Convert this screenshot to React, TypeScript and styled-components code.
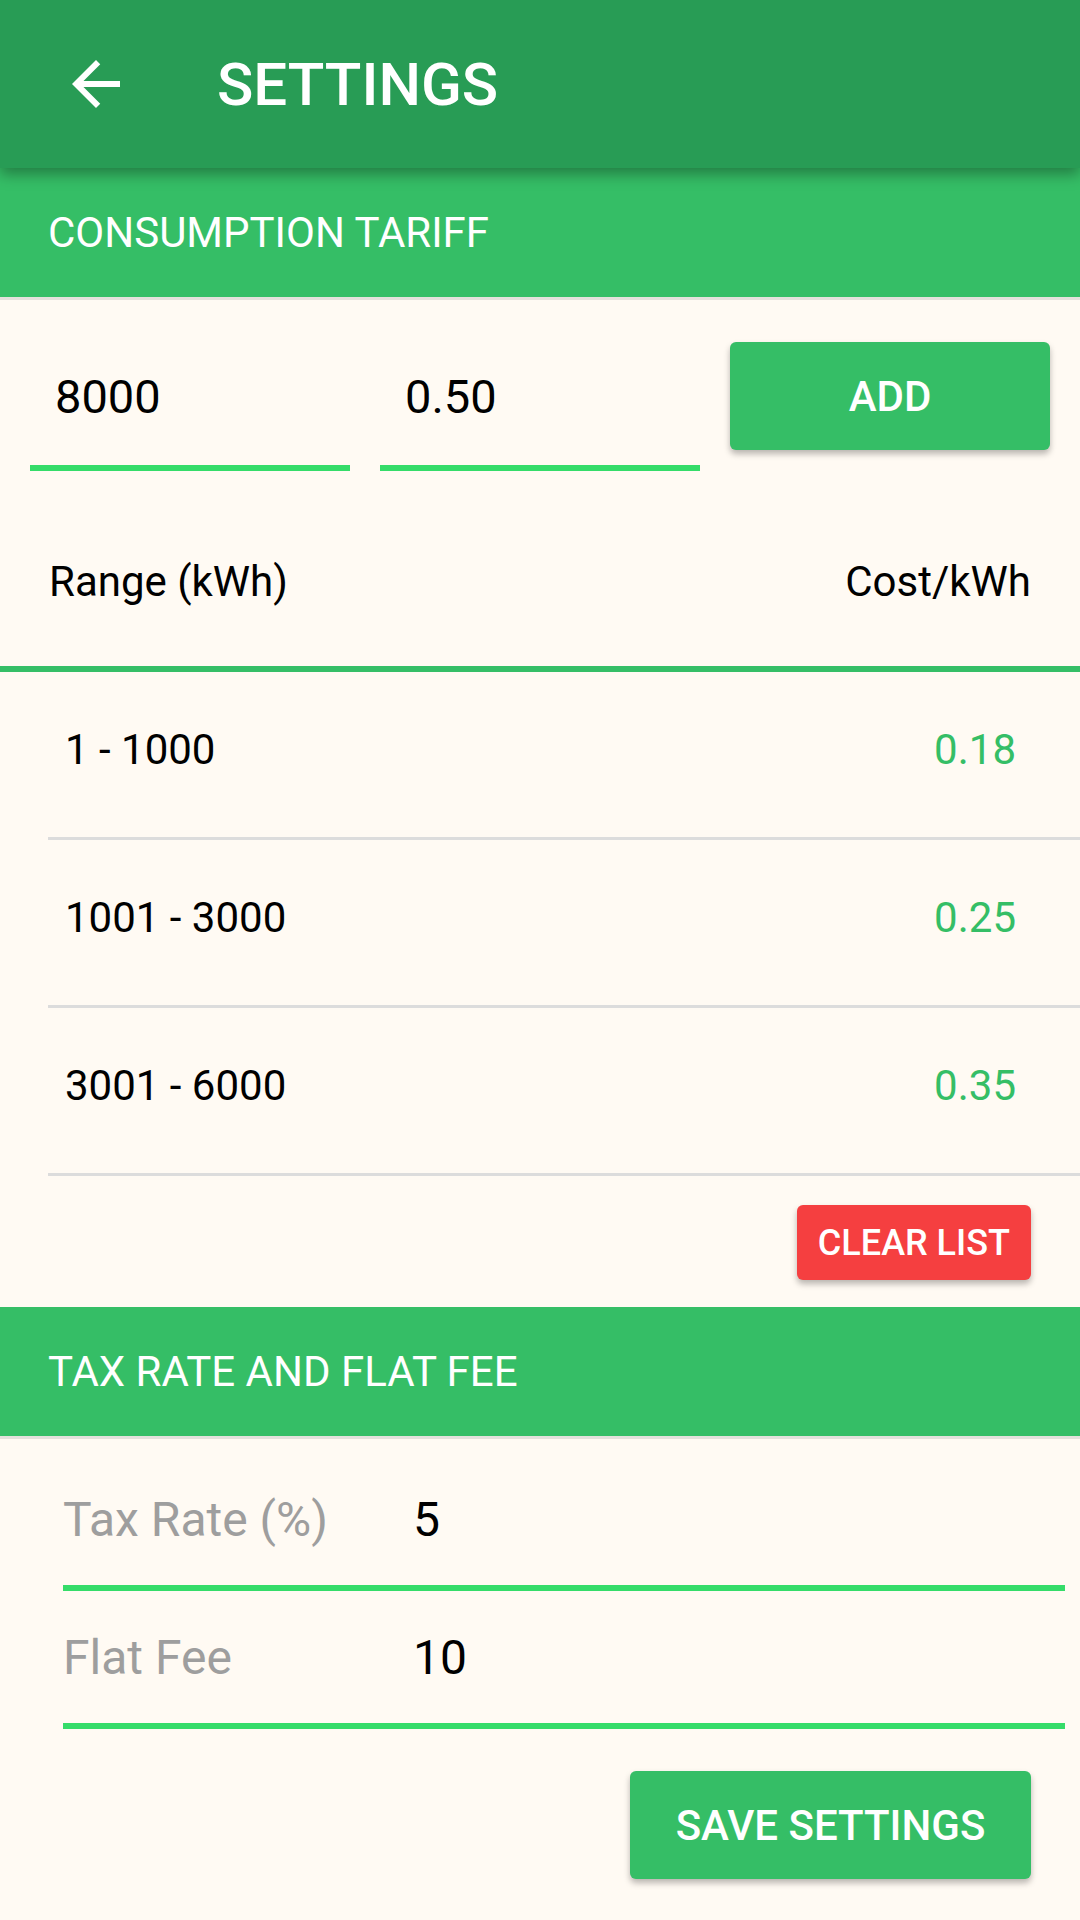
import React from 'react';
import styled, { createGlobalStyle } from 'styled-components';

const GlobalStyle = createGlobalStyle`
  html, body {
    margin: 0;
    padding: 0;
    background: #fffaf3;
  }
  body {
    font-family: Roboto, 'Noto Sans', sans-serif;
    color: #000;
  }
`;

interface Tier {
  range: string;
  cost: string;
}

const tiers: Tier[] = [
  { range: '1 - 1000', cost: '0.18' },
  { range: '1001 - 3000', cost: '0.25' },
  { range: '3001 - 6000', cost: '0.35' },
];

const BackIcon: React.FC = () => (
  <svg width='72' height='72' viewBox='0 0 24 24' fill='#fff'>
    <path d='M20 11H7.83l5.59-5.59L12 4l-8 8 8 8 1.41-1.41L7.83 13H20v-2z' />
  </svg>
);

const App: React.FC = () => {
  return (
    <Screen>
      <GlobalStyle />
      <AppBar>
        <BackButton>
          <BackIcon />
        </BackButton>
        <AppTitle>SETTINGS</AppTitle>
      </AppBar>

      <SectionHeader>CONSUMPTION TARIFF</SectionHeader>

      <InputRow>
        <Field>8000</Field>
        <Field>0.50</Field>
        <RaisedButton>ADD</RaisedButton>
      </InputRow>

      <TableHeader>
        <span>Range (kWh)</span>
        <span>Cost/kWh</span>
      </TableHeader>

      <TierList>
        {tiers.map((t) => (
          <TierRow key={t.range}>
            <span>{t.range}</span>
            <TierCost>{t.cost}</TierCost>
          </TierRow>
        ))}
      </TierList>

      <ActionRow $top={29} $bottom={27}>
        <ClearButton>CLEAR LIST</ClearButton>
      </ActionRow>

      <SectionHeader>TAX RATE AND FLAT FEE</SectionHeader>

      <FeeForm>
        <FeeField>
          <FeeLabel>Tax Rate (%)</FeeLabel>
          <FeeValue>5</FeeValue>
        </FeeField>
        <FeeField>
          <FeeLabel>Flat Fee</FeeLabel>
          <FeeValue>10</FeeValue>
        </FeeField>
      </FeeForm>

      <ActionRow $top={42} $bottom={39}>
        <RaisedButton $wide>SAVE SETTINGS</RaisedButton>
      </ActionRow>
    </Screen>
  );
};

export default App;

const Screen = styled.div`
  width: 1080px;
  min-height: 1920px;
  background: #fffaf3;
  overflow: hidden;
`;

const AppBar = styled.header`
  position: relative;
  z-index: 2;
  height: 168px;
  display: flex;
  align-items: center;
  background: #289c55;
  box-shadow: 0 6px 14px rgba(0, 0, 0, 0.35);
`;

const BackButton = styled.div`
  width: 72px;
  height: 72px;
  margin-left: 60px;
  display: flex;
`;

const AppTitle = styled.h1`
  margin: 0 0 0 85px;
  font-size: 60px;
  font-weight: 500;
  color: #fff;
`;

const SectionHeader = styled.div`
  height: 129px;
  display: flex;
  align-items: center;
  padding-left: 48px;
  background: #35be66;
  border-bottom: 3px solid #e4e1dc;
  color: #fff;
  font-size: 42px;
`;

const InputRow = styled.div`
  display: grid;
  grid-template-columns: repeat(3, 1fr);
  gap: 30px;
  padding: 42px 30px 0;
  align-items: start;
`;

const Field = styled.div`
  height: 123px;
  padding-left: 25px;
  line-height: 110px;
  font-size: 47px;
  border-bottom: 6px solid #35dc69;
`;

const RaisedButton = styled.div<{ $wide?: boolean }>`
  height: 108px;
  width: ${(p) => (p.$wide ? '401px' : 'auto')};
  display: flex;
  align-items: center;
  justify-content: center;
  background: #35be66;
  color: #fff;
  font-size: 42px;
  font-weight: 500;
  border-radius: 6px;
  box-shadow: 0 4px 6px rgba(0, 0, 0, 0.28);
`;

const TableHeader = styled.div`
  display: flex;
  justify-content: space-between;
  padding: 86px 49px 59px;
  line-height: 50px;
  font-size: 42px;
  border-bottom: 6px solid #35be66;
`;

const TierList = styled.div`
  margin-left: 48px;
`;

const TierRow = styled.div`
  display: flex;
  justify-content: space-between;
  padding: 53px 64px 62px 17px;
  line-height: 50px;
  font-size: 42px;
  border-bottom: 3px solid #dcdcdc;
`;

const TierCost = styled.span`
  color: #35be66;
`;

const ActionRow = styled.div<{ $top: number; $bottom: number }>`
  display: flex;
  justify-content: flex-end;
  padding: ${(p) => p.$top}px 49px ${(p) => p.$bottom}px 0;
`;

const ClearButton = styled.div`
  height: 75px;
  padding: 0 21px;
  display: flex;
  align-items: center;
  background: #f53f40;
  color: #fff;
  font-size: 36px;
  font-weight: 500;
  border-radius: 6px;
  box-shadow: 0 4px 6px rgba(0, 0, 0, 0.28);
`;

const FeeForm = styled.div`
  padding: 14px 15px 0 63px;
`;

const FeeField = styled.div`
  height: 132px;
  display: flex;
  align-items: center;
  font-size: 48px;
  border-bottom: 6px solid #35dc69;
`;

const FeeLabel = styled.span`
  width: 350px;
  color: #9e9e9e;
`;

const FeeValue = styled.span`
  color: #000;
`;
